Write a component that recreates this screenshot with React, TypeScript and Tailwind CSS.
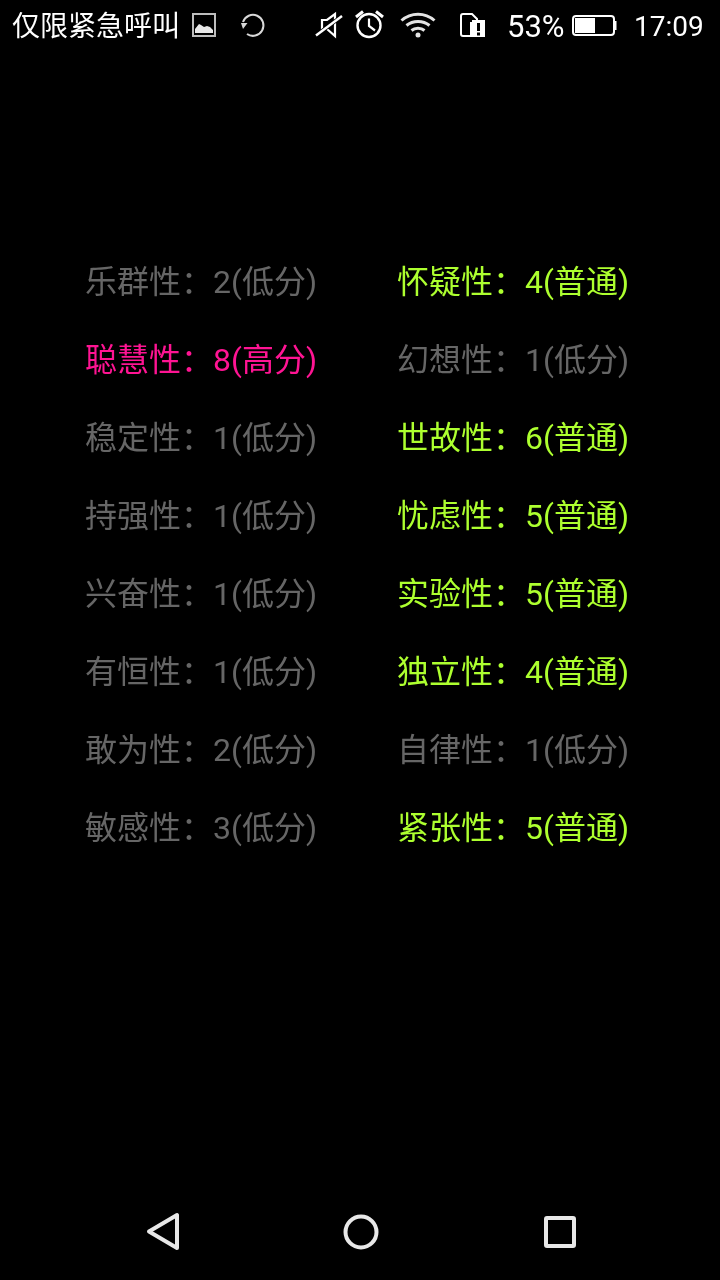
const font = { fontFamily: '"Roboto", "Noto Sans CJK SC", sans-serif' };

type Level = 'low' | 'normal' | 'high';

const levelColor: Record<Level, string> = {
  low: 'text-[#666666]',
  normal: 'text-[#adff2f]',
  high: 'text-[#ff1493]',
};

const levelName: Record<Level, string> = { low: '低分', normal: '普通', high: '高分' };

const rows: [string, number, Level][] = [
  ['乐群性', 2, 'low'],
  ['怀疑性', 4, 'normal'],
  ['聪慧性', 8, 'high'],
  ['幻想性', 1, 'low'],
  ['稳定性', 1, 'low'],
  ['世故性', 6, 'normal'],
  ['持强性', 1, 'low'],
  ['忧虑性', 5, 'normal'],
  ['兴奋性', 1, 'low'],
  ['实验性', 5, 'normal'],
  ['有恒性', 1, 'low'],
  ['独立性', 4, 'normal'],
  ['敢为性', 2, 'low'],
  ['自律性', 1, 'low'],
  ['敏感性', 3, 'low'],
  ['紧张性', 5, 'normal'],
];

function StatusBar() {
  return (
    <div className="h-[50px] flex items-center text-white text-[28px] pl-3 shrink-0 whitespace-nowrap will-change-transform">
      <span className="w-[168px] leading-none mt-[3px]">仅限紧急呼叫</span>
      {/* image */}
      <svg className="ml-3" width="24" height="24" viewBox="0 0 24 24">
        <rect x="1" y="1" width="22" height="22" fill="none" stroke="#bdbdbd" strokeWidth="2" />
        <path d="M3 20v-4l4-5 2 1 3 2 3-1 3 1 3 3v3z" fill="#e8e8e8" />
      </svg>
      {/* sync */}
      <svg className="ml-6" width="26" height="26" viewBox="0 0 26 26" fill="none">
        <path d="M3 10A10.500 10.500 0 1 1 7 22" stroke="#d8d8d8" strokeWidth="2" />
        <path d="M1 11h6.500L3 17z" fill="#d8d8d8" />
      </svg>
      {/* muted */}
      <svg className="ml-[49px]" width="28" height="28" viewBox="0 0 28 28" fill="none" stroke="#fff" strokeWidth="2.200">
        <path d="M7 9h5l8-6v22l-8-7H7z" />
        <path d="M1 24.500 27 5" stroke="#000" strokeWidth="4" />
        <path d="M1 24.500 27 5" strokeWidth="2.400" />
      </svg>
      {/* alarm */}
      <svg className="ml-[11px]" width="30" height="30" viewBox="0 0 30 30" fill="none" stroke="#fff">
        <circle cx="15" cy="15.500" r="11.500" strokeWidth="2.400" />
        <path d="M15 8.500v7.500l6 4.500" strokeWidth="2.200" />
        <path d="M2 7 9 1.500M29 7 22 1.500" strokeWidth="3" />
      </svg>
      {/* wifi */}
      <svg className="ml-[16px]" width="36" height="28" viewBox="0 0 36 28" fill="none" stroke="#e4e4e4" strokeWidth="3">
        <path d="M1.500 9.500C11 1 25 1 34.500 9.500" />
        <path d="M6.500 14.500C13 9 23 9 29.500 14.500" />
        <path d="M11.500 19.500C15 16.500 21 16.500 24.500 19.500" />
        <circle cx="18" cy="24" r="2.500" fill="#e4e4e4" stroke="none" />
      </svg>
      {/* sim with warning */}
      <svg className="ml-[24px]" width="25" height="24" viewBox="0 0 25 24">
        <path d="M1 3a2 2 0 0 1 2-2h9l5 5v4h-6v13H3a2 2 0 0 1-2-2z" fill="none" stroke="#fff" strokeWidth="2" />
        <rect x="12" y="7" width="13" height="17" fill="#fff" />
        <rect x="17" y="10" width="3" height="8" fill="#000" />
        <rect x="17" y="19.500" width="3" height="3" fill="#000" />
      </svg>
      <span className="ml-[22px] w-[58px] leading-none text-[31px] mt-[2px]" style={font}>53%</span>
      {/* battery */}
      <svg className="ml-[7px]" width="45" height="24" viewBox="0 0 45 24" fill="none">
        <rect x="1" y="3" width="41" height="19" rx="3" stroke="#fff" strokeWidth="2" />
        <rect x="3" y="5" width="20" height="15" fill="#fff" />
        <rect x="42.500" y="8" width="2" height="9" fill="#fff" />
      </svg>
      <span className="ml-[17px] leading-none mt-[3px]" style={font}>17:09</span>
    </div>
  );
}

function NavBar() {
  return (
    <div className="h-[96px] flex items-center pl-[146px] shrink-0 text-[#e8e8e8]">
      <svg width="34" height="40" viewBox="0 0 34 40" fill="none" stroke="currentColor" strokeWidth="4" strokeLinejoin="round">
        <path d="M3 19.500 31 3v33z" />
      </svg>
      <svg className="ml-[163px]" width="36" height="36" viewBox="0 0 36 36" fill="none" stroke="currentColor" strokeWidth="4">
        <circle cx="18" cy="18" r="15.500" />
      </svg>
      <svg className="ml-[165px]" width="32" height="32" viewBox="0 0 32 32" fill="none" stroke="currentColor" strokeWidth="4" strokeLinejoin="round">
        <rect x="2" y="2" width="28" height="28" rx="1" />
      </svg>
    </div>
  );
}

export default function App() {
  return (
    <div className="h-[1280px] w-[720px] bg-black flex flex-col overflow-hidden" style={font}>
      <StatusBar />
      <main className="flex-1 pt-[193px] pl-[85px]">
        <div className="grid grid-cols-[312px_1fr] auto-rows-[78px] will-change-transform">
          {rows.map(([name, score, level]) => (
            <div key={name} className={`flex items-center text-[32px] whitespace-nowrap ${levelColor[level]}`}>
              {name}：{score}({levelName[level]})
            </div>
          ))}
        </div>
      </main>
      <NavBar />
    </div>
  );
}
